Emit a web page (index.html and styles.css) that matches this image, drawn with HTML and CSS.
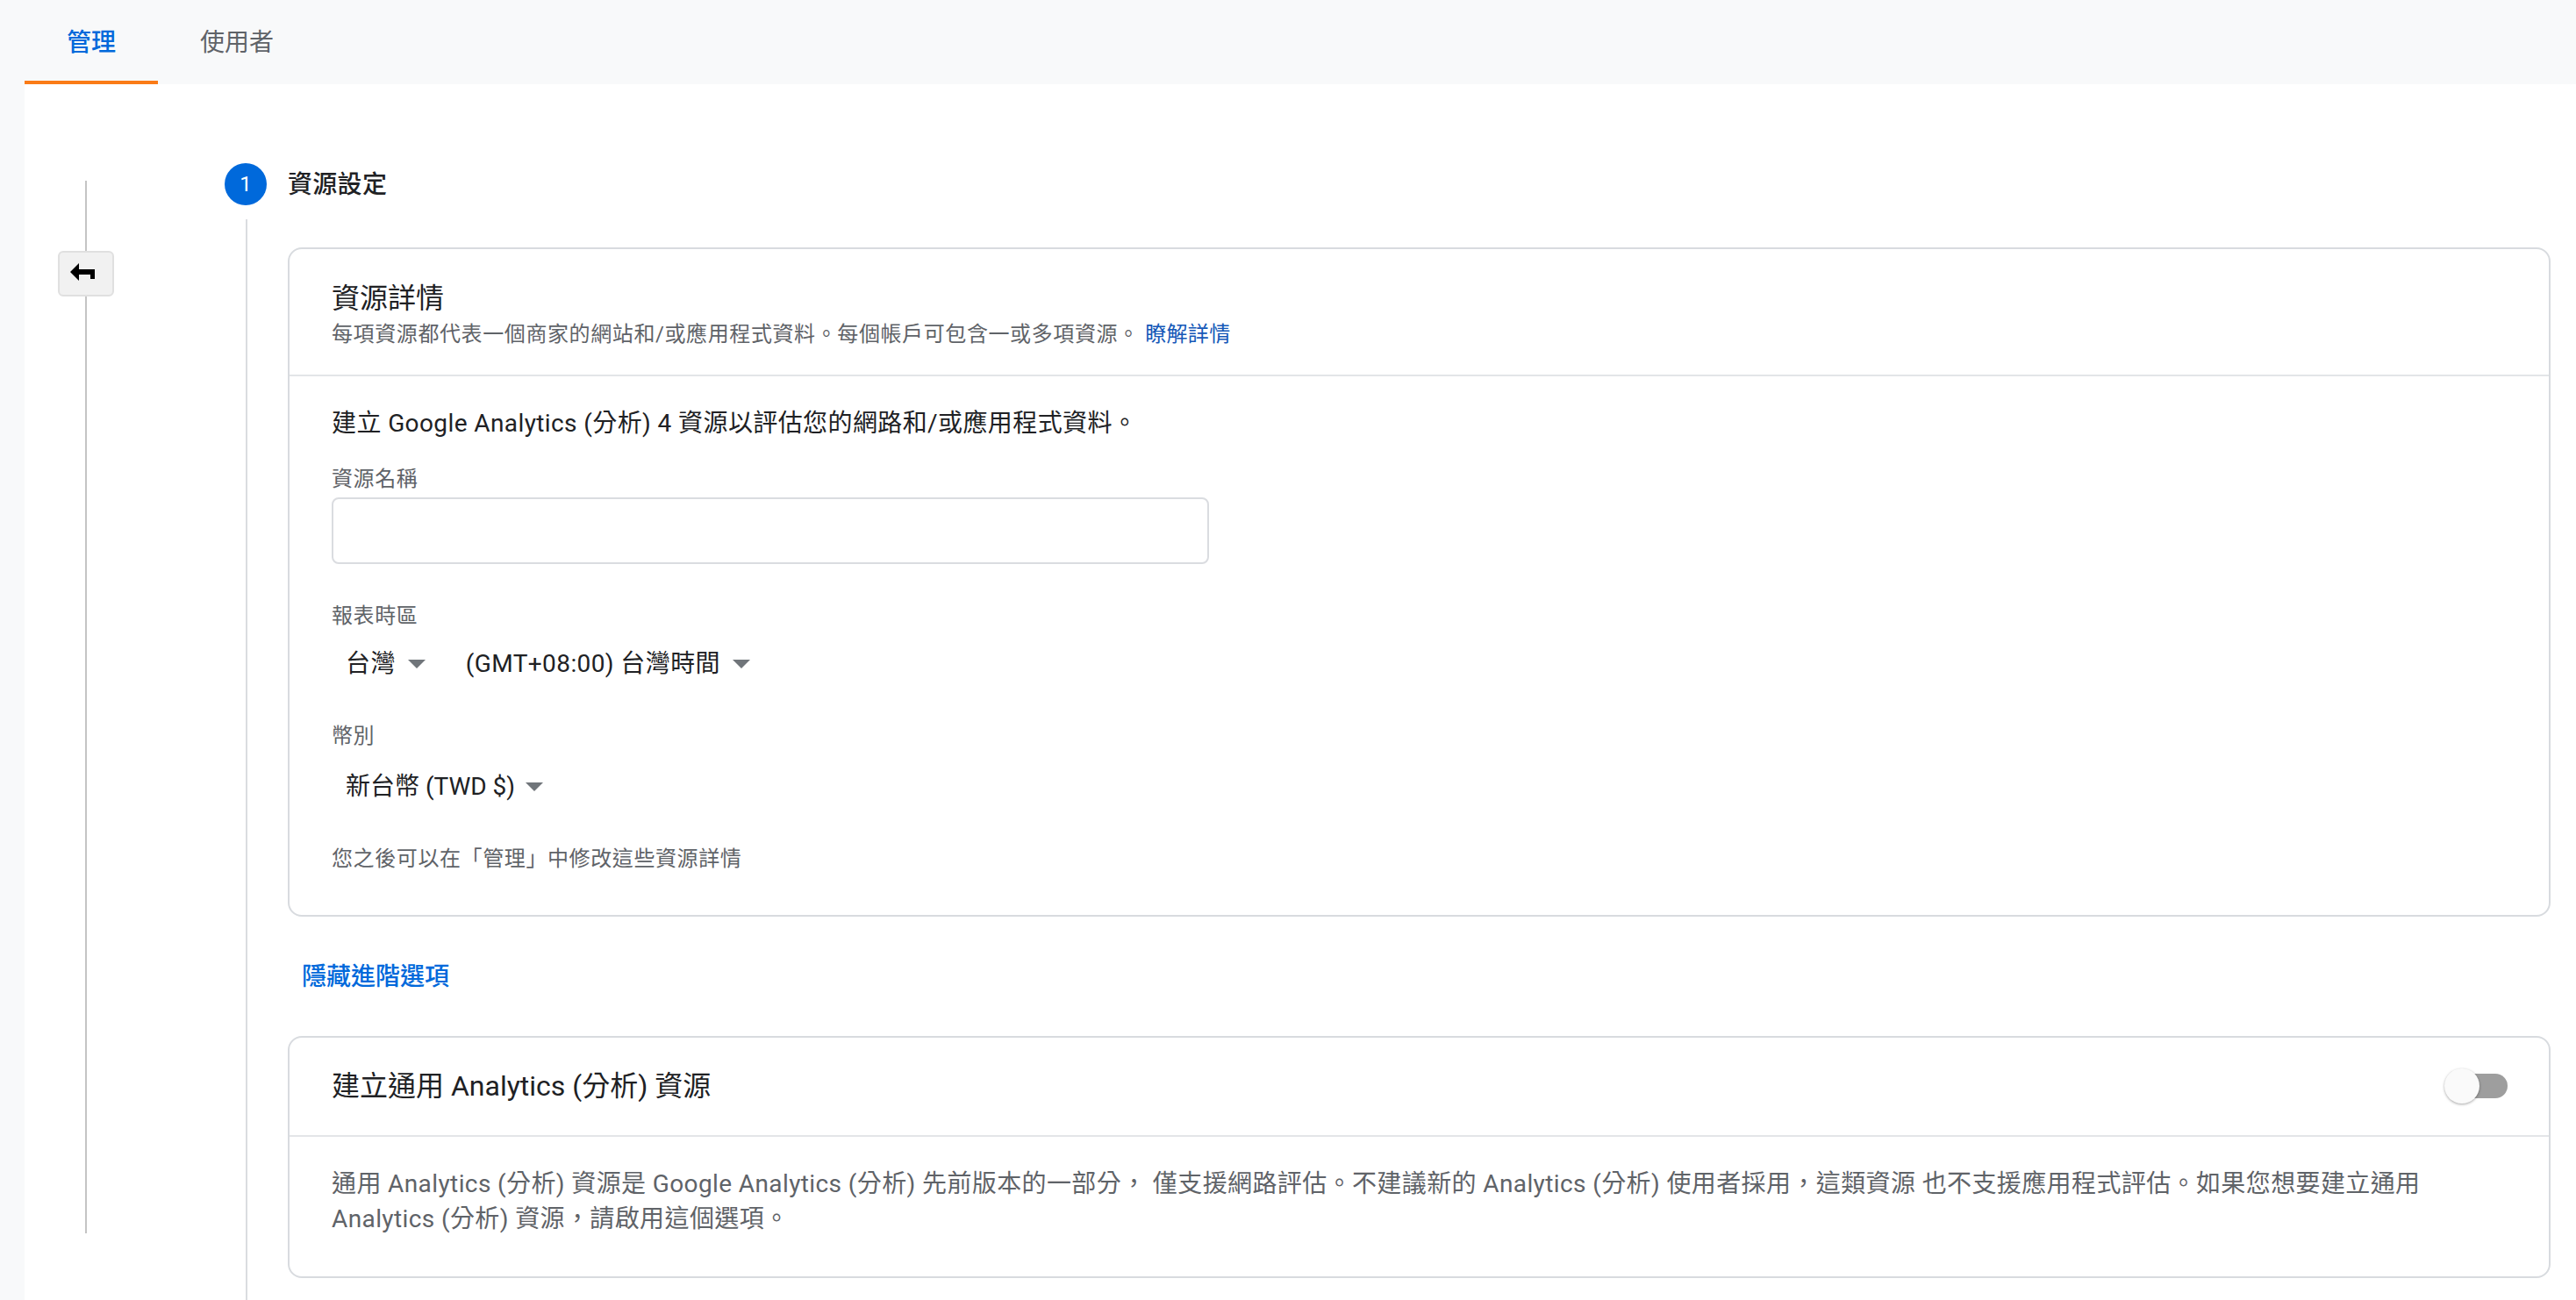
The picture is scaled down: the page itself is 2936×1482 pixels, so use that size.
FILE: index.html
```html
<!DOCTYPE html>
<html lang="zh-Hant">
<head>
<meta charset="utf-8">
<title>資源設定</title>
<link rel="stylesheet" href="styles.css">
</head>
<body>
<nav class="tabs">
  <div class="tab tab-active">管理</div>
  <div class="tab">使用者</div>
</nav>
<main class="page">
  <aside class="rail">
    <div class="rail-line"></div>
    <button class="back" type="button" aria-label="返回">
      <svg class="back-icon" viewBox="0 0 28 20"><path d="M0 10 10 0v7h18v11h-5v-5H10v7z"/></svg>
    </button>
    <div class="rail-line"></div>
  </aside>
  <section class="stepper">
    <header class="step-head">
      <span class="step-num">1</span>
      <h1 class="step-title">資源設定</h1>
    </header>
    <div class="step-body">
      <div class="card">
        <div class="card-head">
          <h2 class="card-title">資源詳情</h2>
          <p class="card-sub">每項資源都代表一個商家的網站和/或應用程式資料。每個帳戶可包含一或多項資源。 <a class="inline-link">瞭解詳情</a></p>
        </div>
        <div class="card-body">
          <p class="intro">建立 Google Analytics (分析) 4 資源以評估您的網路和/或應用程式資料。</p>
          <div class="label label-name">資源名稱</div>
          <div class="input"></div>
          <div class="label label-zone">報表時區</div>
          <div class="selects">
            <div class="select">台灣<i class="caret"></i></div>
            <div class="select">(GMT+08:00) 台灣時間<i class="caret"></i></div>
          </div>
          <div class="label label-cur">幣別</div>
          <div class="selects selects-cur">
            <div class="select">新台幣 (TWD $)<i class="caret"></i></div>
          </div>
          <div class="label label-note">您之後可以在「管理」中修改這些資源詳情</div>
        </div>
      </div>
      <a class="toggle-link">隱藏進階選項</a>
      <div class="card card-ua">
        <div class="ua-head">
          <h2 class="card-title">建立通用 Analytics (分析) 資源</h2>
          <div class="switch"><span class="switch-knob"></span></div>
        </div>
        <p class="ua-text">通用 Analytics (分析) 資源是 Google Analytics (分析) 先前版本的一部分， 僅支援網路評估。不建議新的 Analytics (分析) 使用者採用，這類資源 也不支援應用程式評估。如果您想要建立通用 Analytics (分析) 資源，請啟用這個選項。</p>
      </div>
    </div>
  </section>
</main>
</body>
</html>
```

FILE: styles.css
```css
* { box-sizing: border-box; }
html, body { height: 100%; }
body {
  margin: 0;
  height: 1482px;
  overflow: hidden;
  background: #f8f9fa;
  color: #202124;
  font-family: Roboto, "Noto Sans CJK TC", sans-serif;
  font-size: 28px;
  display: flex;
  flex-direction: column;
}
h1, h2, p { margin: 0; font-weight: 400; }

.tabs { display: flex; height: 96px; padding-left: 28px; flex: none; }
.tab {
  padding: 2px 48px 0;
  line-height: 94px;
  color: #5f6368;
  font-size: 28px;
}
.tab-active { color: #0069db; font-weight: 500; box-shadow: inset 0 -4px 0 #fa7b17; }

.page { flex: 1; display: flex; margin-left: 28px; background: #fff; min-height: 0; }

.rail {
  flex: none;
  width: 228px;
  height: 1310px;
  padding: 110px 0 0 38px;
  display: flex;
  flex-direction: column;
  align-items: flex-start;
}
.rail-line { width: 2px; background: #c4c4c4; margin-left: 31px; }
.rail-line:first-child { height: 80px; }
.rail-line:last-child { flex: 1; }
.back {
  width: 64px;
  height: 52px;
  padding: 0;
  border: 2px solid #e0e0e0;
  border-radius: 6px;
  background: #f1f1f1;
  display: flex;
  align-items: center;
  justify-content: center;
}
.back-icon { width: 28px; height: 20px; margin-right: 8px; margin-bottom: 4px; }

.stepper { flex: 1; min-width: 0; padding: 90px 29px 0 0; display: flex; flex-direction: column; }
.step-head { display: flex; align-items: center; gap: 24px; height: 48px; }
.step-num {
  width: 48px; height: 48px; border-radius: 50%;
  background: #0069db; color: #fff;
  font-size: 24px; line-height: 48px; text-align: center;
}
.step-title { font-size: 28px; font-weight: 500; line-height: 48px; padding-top: 2px; letter-spacing: .3px; }
.step-body {
  flex: 1;
  margin: 16px 0 0 24px;
  padding: 32px 0 0 46px;
  border-left: 2px solid #dadce0;
}

.card { border: 2px solid #d8dbdf; border-radius: 16px; background: #fff; }
.card-head { padding: 36px 48px 30px; border-bottom: 2px solid #e3e5e8; }
.card-title { font-size: 32px; line-height: 40px; }
.card-sub { margin-top: 5px; font-size: 24px; line-height: 32px; color: #5f6368; letter-spacing: .6px; }
.inline-link { color: #1558b8; letter-spacing: .3px; }

.card-body { padding: 34px 48px 48px; }
.intro { line-height: 40px; letter-spacing: .4px; }
.label { font-size: 24px; line-height: 32px; color: #5f6368; letter-spacing: .6px; }
.label-name { margin-top: 27px; }
.label-zone { margin-top: 43px; }
.label-cur { margin-top: 46px; }
.label-note { margin-top: 46px; }
.input { width: 1000px; height: 76px; margin-top: 5px; border: 2px solid #dadce0; border-radius: 8px; }

.selects { display: flex; margin: 19px 0 0 16px; gap: 46px; letter-spacing: .4px; }
.selects-cur { margin-top: 22px; letter-spacing: 0; }
.select { display: flex; align-items: center; line-height: 40px; }
.caret {
  width: 0; height: 0; margin-left: 14px;
  border: 10px solid transparent;
  border-top-color: #70757a;
  border-bottom-width: 0;
}
.selects-cur .caret { margin-left: 12px; }

.toggle-link { display: block; margin: 49px 0 47px 16px; line-height: 40px; font-weight: 500; color: #0069db; }

.ua-head { height: 113px; padding: 0 47px 2px 48px; display: flex; align-items: center; justify-content: space-between; border-bottom: 2px solid #e3e5e8; }
.switch { position: relative; width: 68px; height: 28px; border-radius: 14px; background: #9e9e9e; }
.switch-knob {
  position: absolute; left: -4px; top: -6px;
  width: 40px; height: 40px; border-radius: 50%;
  background: #fafafa;
  box-shadow: 0 1px 3px rgba(0,0,0,.35);
}
.ua-text { padding: 34px 48px 45px; line-height: 40px; color: #5f6368; letter-spacing: .39px; }
```
